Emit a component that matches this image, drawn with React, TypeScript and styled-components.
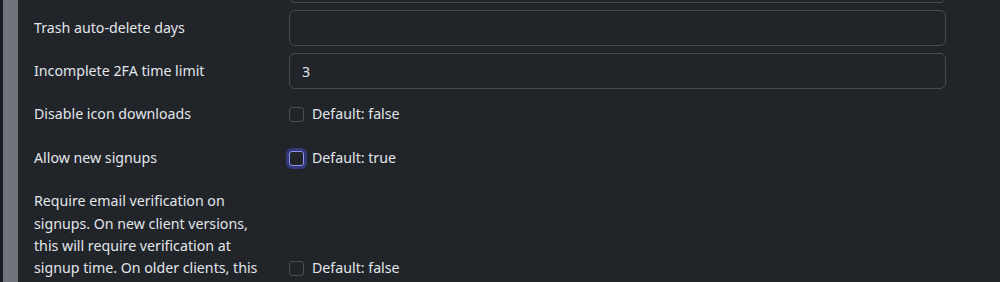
import React from 'react';
import styled, { createGlobalStyle } from 'styled-components';

const GlobalStyle = createGlobalStyle`
  html, body {
    margin: 0;
    padding: 0;
    background: #212529;
    overflow: hidden;
  }
  body {
    font-family: "Segoe UI", "Noto Sans", "Open Sans", sans-serif;
    font-size: 14.2px;
    line-height: 22.4px;
    color: #e2e5e9;
  }
`;

const Page = styled.div`
  display: flex;
  height: 282px;
  overflow: hidden;
`;

const Edge = styled.div`
  width: 3px;
  flex: none;
  background: #1a1b21;
`;

const Rail = styled.div`
  width: 15px;
  flex: none;
  background: #6f747a;
`;

const Body = styled.div`
  flex: 1;
  padding: 0 16px;
  margin-top: -33.8px;
`;

const Row = styled.div`
  display: grid;
  grid-template-columns: 255px 657px;
  align-items: center;
  margin-bottom: 7px;
`;

const Label = styled.label<{ $hidden?: boolean }>`
  display: block;
  padding: 7px 24px 7px 0;
  visibility: ${p => (p.$hidden ? 'hidden' : 'visible')};
`;

const TextInput = styled.input`
  box-sizing: border-box;
  width: 100%;
  height: 36.4px;
  padding: 6px 12px;
  font: inherit;
  color: #e2e5e9;
  background: #212529;
  border: 1px solid #494d53;
  border-radius: 6px;
  outline: none;
`;

const CheckWrap = styled.div`
  display: flex;
  align-items: center;
  gap: 8px;
`;

const Box = styled.span<{ $focused?: boolean }>`
  box-sizing: border-box;
  width: 15px;
  height: 15px;
  border-radius: 3px;
  border: 1px solid ${p => (p.$focused ? '#8f93ee' : '#4a4e54')};
  box-shadow: ${p => (p.$focused ? '0 0 0 3px rgba(70, 74, 190, 0.55)' : 'none')};
  background: #212529;
`;

type Setting =
  | { label: string; kind: 'text'; value: string; hidden?: boolean }
  | { label: string; kind: 'check'; def: string; focused?: boolean };

const settings: Setting[] = [
  { label: 'Hidden previous', kind: 'text', value: '', hidden: true },
  { label: 'Trash auto-delete days', kind: 'text', value: '' },
  { label: 'Incomplete 2FA time limit', kind: 'text', value: '3' },
  { label: 'Disable icon downloads', kind: 'check', def: 'false' },
  { label: 'Allow new signups', kind: 'check', def: 'true', focused: true },
  {
    label:
      'Require email verification on signups. On new client versions, this will require verification at signup time. On older clients, this will prevent logins from succeeding until the address has been verified',
    kind: 'check',
    def: 'false',
  },
];

export default function App() {
  return (
    <>
      <GlobalStyle />
      <Page>
        <Edge />
        <Rail />
        <Body>
          {settings.map((s, i) => (
            <Row key={i}>
              <Label $hidden={s.kind === 'text' && s.hidden}>{s.label}</Label>
              {s.kind === 'text' ? (
                <TextInput defaultValue={s.value} readOnly />
              ) : (
                <CheckWrap>
                  <Box $focused={s.focused} />
                  <span>Default: {s.def}</span>
                </CheckWrap>
              )}
            </Row>
          ))}
        </Body>
      </Page>
    </>
  );
}
